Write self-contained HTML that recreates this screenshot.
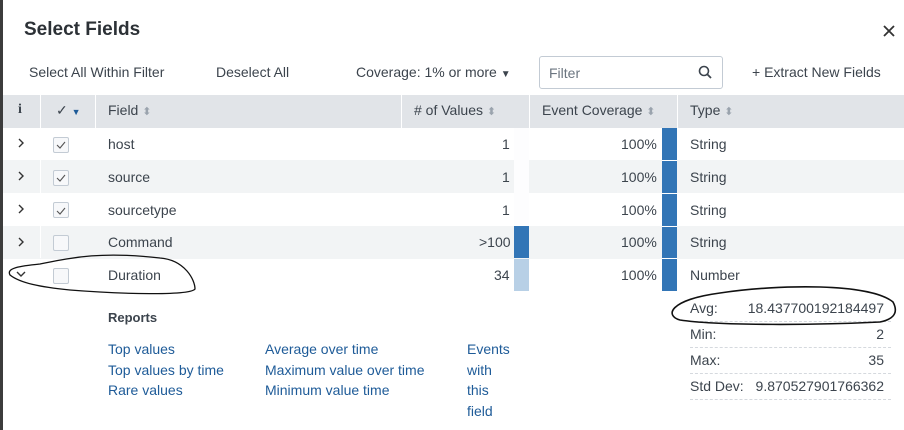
<!DOCTYPE html>
<html><head><meta charset="utf-8"><style>
*{margin:0;padding:0;box-sizing:border-box}
body{width:904px;height:430px;background:#fff;font-family:"Liberation Sans",sans-serif;color:#3c444d;font-size:14px;position:relative;overflow:hidden}
.a{position:absolute;white-space:nowrap}
.row{position:absolute;left:3px;width:901px;height:33px}
.g{background:#f2f4f5}
.cb{position:absolute;left:53px;width:16px;height:16px;border:1px solid #c3cbd4;border-radius:2px;background:#f7f8fa}
.bar{position:absolute;width:15px;background:#3275b6}
.lnk{color:#1e5b98}
.s{color:#9aa3ad;font-size:11px}
</style></head><body>
<div class="a" style="left:0;top:0;width:3px;height:430px;background:#3c3c3c"></div>
<div class="a" style="left:24px;top:19px;font-size:19px;font-weight:bold;color:#2c3136">Select Fields</div>
<svg class="a" style="left:883px;top:25px" width="12" height="12"><path d="M1 1L11 11M11 1L1 11" stroke="#333" stroke-width="1.8"/></svg>
<div class="a" style="left:29px;top:64px">Select All Within Filter</div>
<div class="a" style="left:216px;top:64px">Deselect All</div>
<div class="a" style="left:356px;top:64px">Coverage: 1% or more <span style="font-size:10px">▼</span></div>
<div class="a" style="left:539px;top:56px;width:184px;height:33px;border:1px solid #c3cbd4;border-radius:3px"></div>
<div class="a" style="left:549px;top:65px;color:#6b7580">Filter</div>
<svg class="a" style="left:698px;top:65px" width="14" height="14"><circle cx="6" cy="6" r="4.5" fill="none" stroke="#3c444d" stroke-width="1.6"/><path d="M9.5 9.5l3.5 3.5" stroke="#3c444d" stroke-width="1.8"/></svg>
<div class="a" style="left:752px;top:64px">+ Extract New Fields</div>

<div class="row" style="top:95px;background:#e1e4e8;height:33px"></div>
<div class="a" style="left:40px;top:95px;width:1px;height:33px;background:#fff"></div>
<div class="a" style="left:95px;top:95px;width:1px;height:33px;background:#fff"></div>
<div class="a" style="left:401px;top:95px;width:1px;height:33px;background:#fff"></div>
<div class="a" style="left:529px;top:95px;width:1px;height:33px;background:#fff"></div>
<div class="a" style="left:677px;top:95px;width:1px;height:33px;background:#fff"></div>
<div class="a" style="left:18px;top:102px;font-family:'Liberation Serif',serif;font-weight:bold">i</div>
<div class="a" style="left:56px;top:102px">✓ <span style="color:#1e5b98;font-size:9px">▼</span></div>
<div class="a" style="left:108px;top:102px">Field <span class="s">⬍</span></div>
<div class="a" style="left:414px;top:102px"># of Values <span class="s">⬍</span></div>
<div class="a" style="left:542px;top:102px">Event Coverage <span class="s">⬍</span></div>
<div class="a" style="left:690px;top:102px">Type <span class="s">⬍</span></div>

<div class="row" style="top:128px"></div>
<div class="row g" style="top:160px"></div>
<div class="row" style="top:193px"></div>
<div class="row g" style="top:226px"></div>
<div class="row" style="top:258px"></div>
<div class="a" style="left:40px;top:128px;width:1px;height:130px;background:#fff"></div>
<div class="a" style="left:514px;top:128px;width:15px;height:97px;background:#fdfdfe"></div>

<svg class="a" style="left:0;top:0" width="904" height="430">
<g fill="none" stroke="#333" stroke-width="1.4">
<path d="M19 139l4 4-4 4"/><path d="M19 172l4 4-4 4"/><path d="M19 205l4 4-4 4"/><path d="M19 238l4 4-4 4"/><path d="M17 272l4 4 4-4"/>
</g>
<g fill="none" stroke="#555" stroke-width="1.1">
<path d="M57 145l3 3 5-6"/><path d="M57 178l3 3 5-6"/><path d="M57 211l3 3 5-6"/>
</g>
</svg>
<div class="cb" style="top:137px"></div><div class="a" style="left:108px;top:136px">host</div><div class="a" style="left:502px;top:136px">1</div>
<div class="cb" style="top:170px"></div><div class="a" style="left:108px;top:169px">source</div><div class="a" style="left:502px;top:169px">1</div>
<div class="cb" style="top:202px"></div><div class="a" style="left:108px;top:202px">sourcetype</div><div class="a" style="left:502px;top:202px">1</div>
<div class="cb" style="top:235px"></div><div class="a" style="left:108px;top:234px">Command</div><div class="a" style="left:479px;top:234px">&gt;100</div>
<div class="cb" style="top:268px"></div><div class="a" style="left:108px;top:267px">Duration</div><div class="a" style="left:494px;top:267px">34</div>
<svg class="a" style="left:0;top:0" width="904" height="430">
<g fill="none" stroke="#555" stroke-width="1.1">
<path d="M57 145l3 3 5-6"/><path d="M57 178l3 3 5-6"/><path d="M57 211l3 3 5-6"/>
</g></svg>

<div class="bar" style="left:514px;top:226px;height:32px"></div>
<div class="bar" style="left:514px;top:259px;height:32px;background:#b8d0e6"></div>
<div class="bar" style="left:662px;top:128px;height:163px"></div>
<div class="a" style="left:662px;top:160px;width:15px;height:1px;background:#fff"></div>
<div class="a" style="left:662px;top:193px;width:15px;height:1px;background:#fff"></div>
<div class="a" style="left:662px;top:226px;width:15px;height:1px;background:#fff"></div>
<div class="a" style="left:662px;top:258px;width:15px;height:1px;background:#fff"></div>
<div class="a" style="left:621px;top:136px">100%</div><div class="a" style="left:621px;top:169px">100%</div><div class="a" style="left:621px;top:202px">100%</div><div class="a" style="left:621px;top:234px">100%</div><div class="a" style="left:621px;top:267px">100%</div>
<div class="a" style="left:690px;top:136px">String</div><div class="a" style="left:690px;top:169px">String</div><div class="a" style="left:690px;top:202px">String</div><div class="a" style="left:690px;top:234px">String</div><div class="a" style="left:690px;top:267px">Number</div>

<div class="a" style="left:108px;top:310px;font-weight:bold;font-size:13px">Reports</div>
<div class="a lnk" style="left:108px;top:339px;line-height:20.5px">Top values<br>Top values by time<br>Rare values</div>
<div class="a lnk" style="left:265px;top:339px;line-height:20.5px">Average over time<br>Maximum value over time<br>Minimum value time</div>
<div class="a lnk" style="left:467px;top:339px;line-height:20.5px">Events<br>with<br>this<br>field</div>

<div class="a" style="left:690px;top:296px;width:201px;line-height:25px">
<div style="display:flex;justify-content:space-between;border-bottom:1px dashed #d5d9de;padding-right:7px"><span>Avg:</span><span>18.437700192184497</span></div>
<div style="display:flex;justify-content:space-between;border-bottom:1px dashed #d5d9de;padding-right:7px"><span>Min:</span><span>2</span></div>
<div style="display:flex;justify-content:space-between;border-bottom:1px dashed #d5d9de;padding-right:7px"><span>Max:</span><span>35</span></div>
<div style="display:flex;justify-content:space-between;border-bottom:1px dashed #d5d9de;padding-right:7px"><span>Std Dev:</span><span>9.870527901766362</span></div>
</div>

<svg class="a" style="left:0;top:0" width="904" height="430">
<path d="M40 264 C70 258 100 251 160 258 C185 260 195 280 195 289 C190 296 120 294 70 290 C40 287 20 283 10 275 C6 268 20 266 40 264Z" fill="none" stroke="#111" stroke-width="1.3"/>
<path d="M720 293 C780 284 870 283 893 302 C900 315 890 320 880 322 C820 325 720 326 680 320 C665 316 668 300 720 293Z" fill="none" stroke="#111" stroke-width="1.6"/>
</svg>
</body></html>
